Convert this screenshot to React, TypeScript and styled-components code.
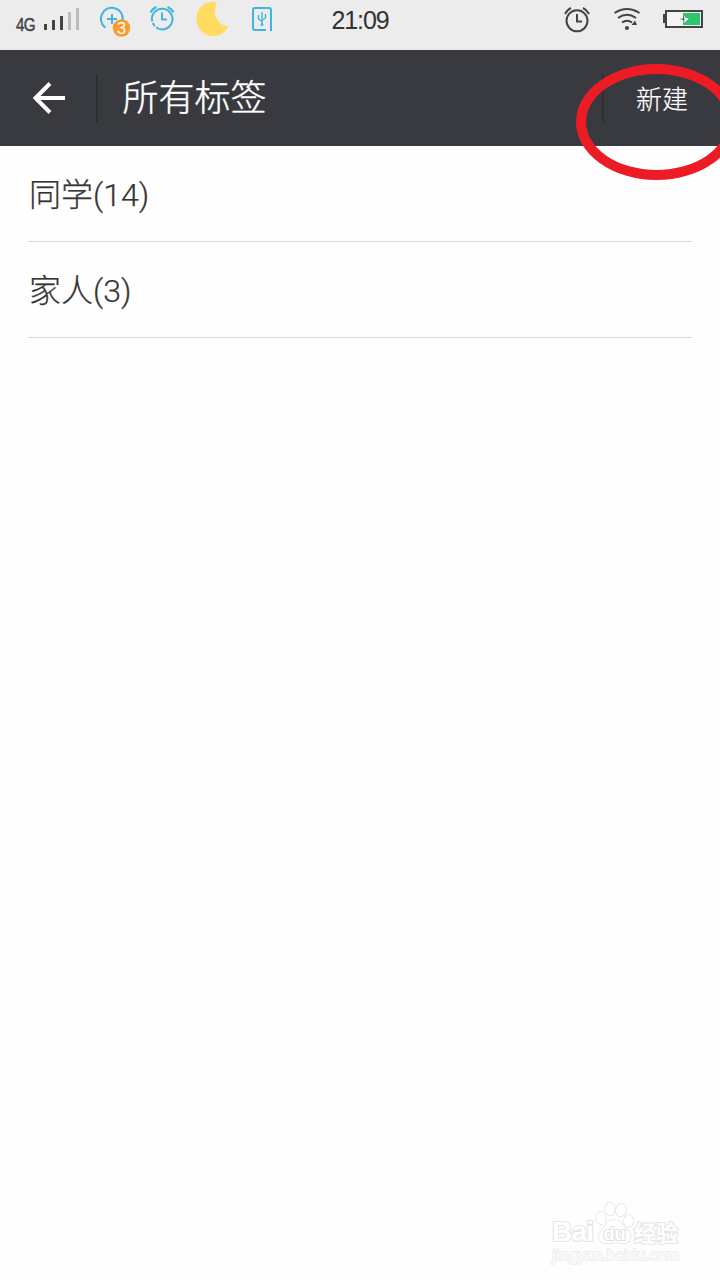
import React from "react";
import styled, { createGlobalStyle } from "styled-components";

const GlobalStyle = createGlobalStyle`
  * { box-sizing: border-box; }
  body {
    margin: 0;
    background: #fefefe;
    font-family: Roboto, "Noto Sans CJK SC", sans-serif;
    font-weight: 300;
  }
`;

const Screen = styled.div`
  position: relative;
  display: flex;
  flex-direction: column;
  width: 720px;
  height: 1280px;
  overflow: hidden;
  background: #fefefe;
`;

const StatusBar = styled.header`
  display: grid;
  grid-template-columns: 1fr auto 1fr;
  height: 50px;
  background: #ececec;
`;

const StatusGroup = styled.div<{ $end?: boolean }>`
  display: flex;
  justify-content: ${(p) => (p.$end ? "flex-end" : "flex-start")};
  svg { display: block; flex: none; }
`;

const Network = styled.span`
  width: 27px;
  margin-left: 16px;
  padding-top: 14px;
  font: 400 19px/21px "Liberation Sans", sans-serif;
  letter-spacing: -1px;
  color: #444;
  -webkit-text-stroke: 0.5px #444;
  transform: scaleX(0.8);
  transform-origin: left;
`;

const Clock = styled.time`
  padding-top: 5px;
  font: 400 25px/30px "Liberation Sans", sans-serif;
  letter-spacing: -1.1px;
  color: #333;
`;

const TitleBar = styled.div`
  display: flex;
  align-items: center;
  height: 96px;
  background: #393a3f;
  color: #fff;
`;

const BackButton = styled.button`
  display: flex;
  width: 96px;
  padding: 0 0 0 32px;
  border: 0;
  background: none;
`;

const Divider = styled.span`
  width: 2px;
  height: 48px;
  background: #2e2f33;
`;

const Title = styled.h1`
  flex: 1;
  margin: 0 0 0 24px;
  padding: 2px 0 0 0.5px;
  font-size: 36px;
  font-weight: 300;
  line-height: 48px;
  -webkit-text-stroke: 0.4px #fff;
`;

const NewButton = styled.button`
  width: 116px;
  padding: 0;
  border: 0;
  background: none;
  color: #fff;
  font: 300 26px/36px "Noto Sans CJK SC", sans-serif;
  -webkit-text-stroke: 0.2px #fff;
`;

const TagList = styled.ul`
  margin: 0;
  padding: 0 28px;
  list-style: none;
`;

const TagRow = styled.li`
  display: flex;
  align-items: center;
  height: 96px;
  padding: 0 0 4px 1px;
  border-bottom: 1px solid #d9d9d9;
  color: #353535;
  font-size: 32px;
  -webkit-text-stroke: 0.25px #353535;
`;

const Highlight = styled.div`
  position: absolute;
  left: 576px;
  top: 64px;
  width: 161px;
  height: 116px;
  border: 10px solid #ed1c24;
  border-radius: 50%;
`;

const Watermark = styled.div`
  position: absolute;
  left: 552px;
  top: 1200px;
  width: 140px;
  color: #fff;
  -webkit-text-stroke: 2.2px #e6e6e6;
  paint-order: stroke fill;
`;

const Brand = styled.div`
  display: flex;
  height: 45px;
  align-items: flex-end;
  svg { flex: none; }
`;

const BrandText = styled.span<{ $cjk?: boolean }>`
  width: ${(p) => (p.$cjk ? 46 : 43)}px;
  white-space: nowrap;
  font: ${(p) =>
    p.$cjk
      ? '700 22px/27px "Noto Sans CJK SC", sans-serif'
      : '700 28px/27px "Liberation Sans", sans-serif'};
  letter-spacing: ${(p) => (p.$cjk ? 0 : -0.8)}px;
`;

const Site = styled.div`
  font: 400 14.7px/18px "Noto Sans", sans-serif;
  -webkit-text-stroke: 1.8px #ececec;
`;

const SignalIcon = () => (
  <svg width="38" height="50" viewBox="43 0 38 50">
    <path d="M44 24h3v6h-3zM52 20h3v10h-3zM60 16h3v14h-3z" fill="#444" />
    <path d="M68 12h3v18h-3zM76 8h3v22h-3z" fill="#bbb" />
  </svg>
);

const AddBadgeIcon = () => (
  <svg width="50" height="50" viewBox="90 0 50 50">
    <g fill="none" stroke="#40b5df" strokeWidth="2">
      <path d="M105.500 27.700A11 11 0 1 1 122.800 20M101.800 23.500l1.500 2.500" />
      <path d="M112 14v10M107 19h10" />
    </g>
    <circle cx="121.500" cy="28" r="8.700" fill="#fb9b2c" />
    <text x="121.500" y="34" textAnchor="middle" fill="#fff" fontFamily="Liberation Sans" fontSize="17" fontWeight="400">3</text>
  </svg>
);

const AlarmIcon = ({ color, usb }: { color: string; usb?: boolean }) => (
  <svg width="30" height="50" viewBox="-15 0 30 50" fill="none" stroke={color} strokeWidth="2">
    {usb ? (
      <path d="M-9.800 21.500A10.300 10.300 0 1 1 -6 27.300M-9.300 23L-7.300 26.200" />
    ) : (
      <circle cx="0" cy="20.800" r="10.500" />
    )}
    {usb ? (
      <path d="M0 12.500v7h5M-11.500 12.500Q-9.500 8.500-5.500 7M11.500 12.500Q9.500 8.500 5.500 7" />
    ) : (
      <path d="M0 14v7.500h5M-12 14Q-9.500 9.500-6 8M12 14Q9.500 9.500 6 8" />
    )}
  </svg>
);

const MoonIcon = () => (
  <svg width="36" height="50" viewBox="194 0 36 50">
    <path d="M217 2.300C208-.5 196.500 6 196.500 18.500C196.500 29 204 36 213 36C220.500 36 226 32 228.500 26C219.500 27 210.500 15 217 2.300Z" fill="#ffdc60" />
  </svg>
);

const UsbIcon = () => (
  <svg width="24" height="50" viewBox="250 0 24 50" fill="none" stroke="#40b5df">
    <path d="M266 30h-11q-2 0-2-2V10q0-2 2-2h14q2 0 2 2v21" strokeWidth="2" />
    <path d="M262 12v14M258.500 15v4l3.500 2.500M265.500 14v4l-3.500 2.500" strokeWidth="1.400" />
    <circle cx="262" cy="24.500" r="1" />
  </svg>
);

const WifiIcon = () => (
  <svg width="30" height="50" viewBox="612 0 30 50" fill="none" stroke="#444" strokeWidth="2">
    <path d="M614.500 13q12.500-8 25 0M618 18q9-6.500 18 0M622 22.500q5-3.500 10 0" />
    <circle cx="627" cy="28" r="2.100" fill="#444" stroke="none" />
    <path d="M631.500 25l3.500-4.500 2 4.500z" fill="#444" stroke="none" />
  </svg>
);

const BatteryIcon = () => (
  <svg width="42" height="50" viewBox="662 0 42 50">
    <path d="M666 11h36v16h-36z" fill="#f4f4f4" stroke="#444" strokeWidth="2" />
    <path d="M663 14h2v9h-2z" fill="#444" />
    <path d="M683 13h17v12h-17z" fill="#2cc76b" />
    <path d="M679.500 19l4-.5V14l2.500 3.500 3 .8-5 5.700.3-4z" fill="#444" />
    <path d="M683.500 14l2 3.500 3.500 1-5 5 .4-4.500z" fill="#f4f4f4" />
  </svg>
);

const BackIcon = () => (
  <svg width="34" height="34" viewBox="32 81 34 34" fill="none" stroke="#fff" strokeWidth="4">
    <path d="M65 98H36M50 83.500L35.500 98L50 112.500" />
  </svg>
);

const PawLogo = () => (
  <svg width="39" height="45" viewBox="595 1200 39 45" fill="#fff" stroke="#e2e2e2" strokeWidth="1.500">
    <ellipse cx="601" cy="1218" rx="4.800" ry="6.200" />
    <ellipse cx="610" cy="1209" rx="4.600" ry="6.500" />
    <ellipse cx="621" cy="1210" rx="5" ry="6.300" transform="rotate(12 621 1210)" />
    <ellipse cx="628.500" cy="1221" rx="4.600" ry="6" />
    <path d="M614 1220C607 1220 606 1226 602 1230C597 1235 598 1243 606 1243C611 1243 617 1242 622 1243C631 1244 633 1236 628 1231C623 1227 621 1220 614 1220Z" />
    <text x="614.500" y="1239.500" textAnchor="middle" fontFamily="Liberation Sans" fontSize="18" fontWeight="700" strokeWidth="2.200" paintOrder="stroke">du</text>
  </svg>
);

const Slot = styled.span<{ $gap: number }>`
  display: flex;
  margin-left: ${(p) => p.$gap}px;
`;

const tags = [
  { name: "同学", count: 14 },
  { name: "家人", count: 3 },
];

export default function App() {
  return (
    <Screen>
      <GlobalStyle />
      <StatusBar>
        <StatusGroup>
          <Network>4G</Network>
          <SignalIcon />
          <Slot $gap={9}><AddBadgeIcon /></Slot>
          <Slot $gap={7}><AlarmIcon color="#40b5df" usb /></Slot>
          <Slot $gap={17}><MoonIcon /></Slot>
          <Slot $gap={20}><UsbIcon /></Slot>
        </StatusGroup>
        <Clock>21:09</Clock>
        <StatusGroup $end>
          <AlarmIcon color="#444" />
          <Slot $gap={20}><WifiIcon /></Slot>
          <Slot $gap={20}><BatteryIcon /></Slot>
          <Slot $gap={16} />
        </StatusGroup>
      </StatusBar>
      <TitleBar>
        <BackButton aria-label="返回"><BackIcon /></BackButton>
        <Divider />
        <Title>所有标签</Title>
        <Divider />
        <NewButton>新建</NewButton>
      </TitleBar>
      <TagList>
        {tags.map((t) => (
          <TagRow key={t.name}>{t.name}({t.count})</TagRow>
        ))}
      </TagList>
      <Highlight />
      <Watermark>
        <Brand>
          <BrandText>Bai</BrandText>
          <PawLogo />
          <BrandText $cjk>经验</BrandText>
        </Brand>
        <Site>jingyan.baidu.com</Site>
      </Watermark>
    </Screen>
  );
}
